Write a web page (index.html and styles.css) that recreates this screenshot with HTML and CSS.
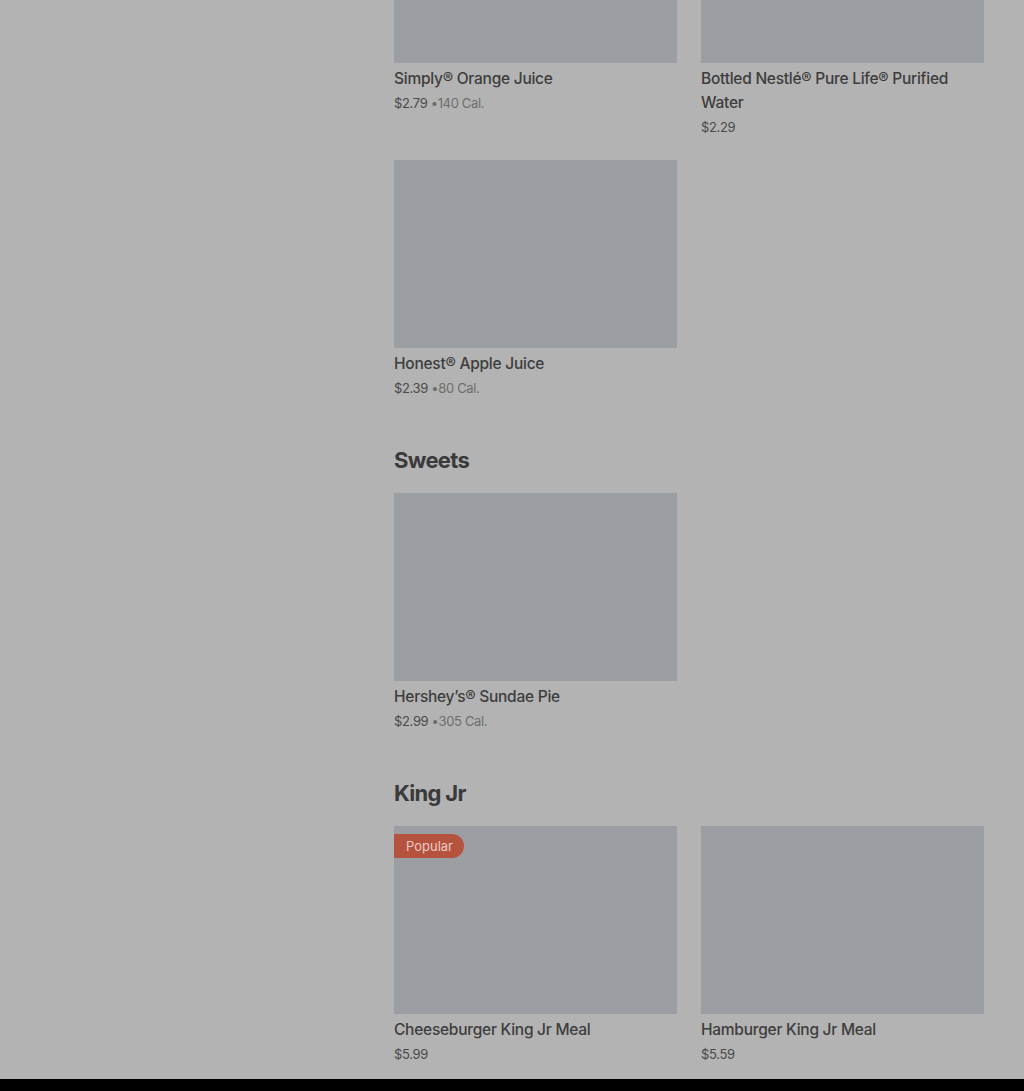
FILE: index.html
```html
<!DOCTYPE html>
<html lang="en">
  <head>
    <meta charset="UTF-8" />
    <meta name="viewport" content="width=device-width, initial-scale=1.0" />
    <title>Menu</title>

    <link rel="stylesheet" href="styles.css">
  </head>
  <body>
    <div class="page">
      <aside class="sidebar"></aside>

      <main class="menu">
        <section class="category first">
          <div class="items">
            <div class="item">
              <div class="photo"></div>
              <div class="info">
                <div class="name">Simply® Orange Juice</div>
                <div class="meta">$2.79 <span class="cal">•140 Cal.</span></div>
              </div>
            </div>
            <div class="item">
              <div class="photo"></div>
              <div class="info">
                <div class="name">Bottled Nestlé® Pure Life® Purified Water</div>
                <div class="meta">$2.29</div>
              </div>
            </div>
            <div class="item">
              <div class="photo"></div>
              <div class="info">
                <div class="name">Honest® Apple Juice</div>
                <div class="meta">$2.39 <span class="cal">•80 Cal.</span></div>
              </div>
            </div>
          </div>
        </section>

        <section class="category">
          <h2>Sweets</h2>
          <div class="items">
            <div class="item">
              <div class="photo"></div>
              <div class="info">
                <div class="name">Hershey’s® Sundae Pie</div>
                <div class="meta">$2.99 <span class="cal">•305 Cal.</span></div>
              </div>
            </div>
          </div>
        </section>

        <section class="category">
          <h2>King Jr</h2>
          <div class="items">
            <div class="item">
              <div class="photo">
                <span class="badge">Popular</span>
              </div>
              <div class="info">
                <div class="name">Cheeseburger King Jr Meal</div>
                <div class="meta">$5.99</div>
              </div>
            </div>
            <div class="item">
              <div class="photo"></div>
              <div class="info">
                <div class="name">Hamburger King Jr Meal</div>
                <div class="meta">$5.59</div>
              </div>
            </div>
          </div>
        </section>
      </main>
    </div>

    <footer class="footer"></footer>
  </body>
</html>
```

FILE: styles.css
```css
body {
  margin: 0;
  background: #b3b3b3;
  font-family: Inter, "Liberation Sans", sans-serif;
  color: #3b3b3b;
  overflow: hidden;
}

.page {
  display: flex;
}

.sidebar {
  width: 394px;
  flex-shrink: 0;
}

.menu {
  width: 590px;
  margin-top: -125px;
}

.category {
  margin-top: 44px;
}

.category.first {
  margin-top: 0;
}

.category h2 {
  margin: 0 0 17px;
  font-size: 22px;
  line-height: 32px;
  font-weight: 700;
  letter-spacing: -0.7px;
  color: #3a3a3a;
}

.items {
  display: grid;
  grid-template-columns: 283px 283px;
  column-gap: 24px;
  row-gap: 21px;
}

.photo {
  position: relative;
  height: 188px;
  background: #9b9ea2;
}

.badge {
  position: absolute;
  top: 8px;
  left: 0;
  height: 24px;
  padding: 0 11px 0 12px;
  border-radius: 0 12px 12px 0;
  background: #b5533f;
  color: #e9cbc4;
  font-size: 13px;
  line-height: 24px;
}

.info {
  padding-top: 4px;
}

.name {
  font-size: 15.5px;
  line-height: 24px;
  font-weight: 500;
  letter-spacing: -0.25px;
  color: #3d3d3d;
}

.meta {
  font-size: 13px;
  line-height: 24px;
  color: #4a4a4a;
  letter-spacing: -0.35px;
}

.cal {
  color: #6e6e6e;
}

.footer {
  margin-top: 13px;
  height: 12px;
  background: #000;
}
```
